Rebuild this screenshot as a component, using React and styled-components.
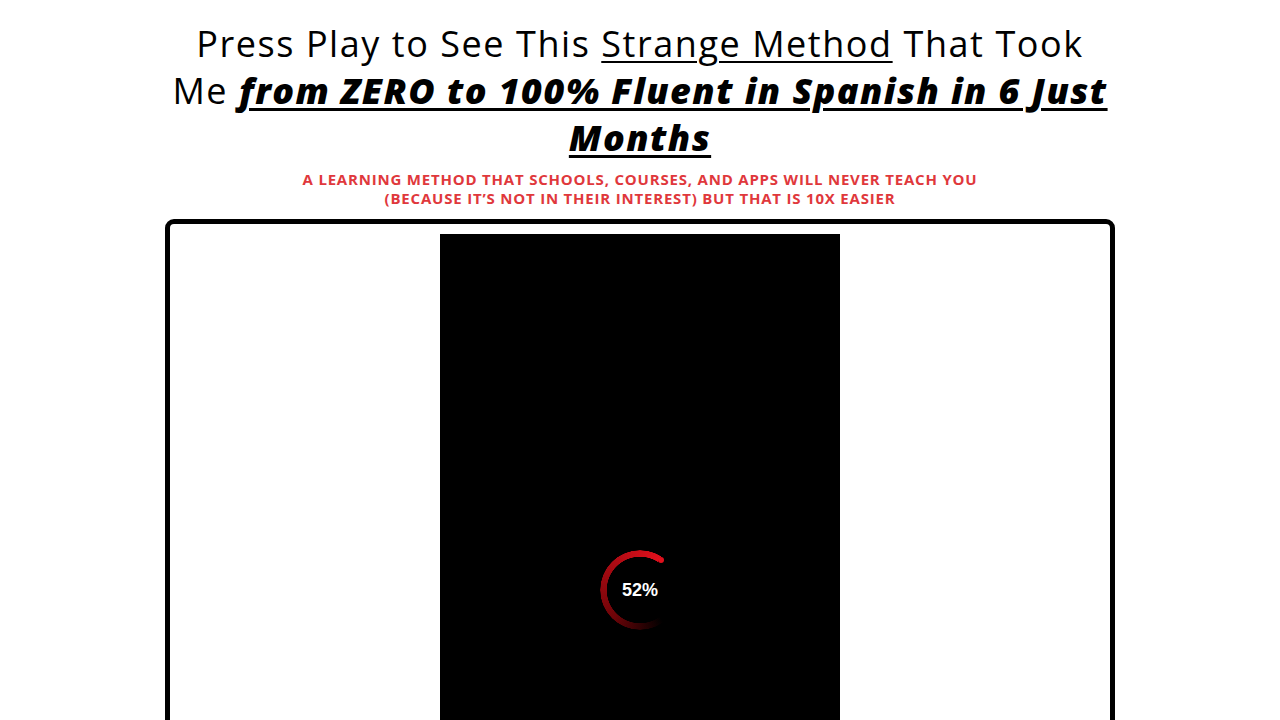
import React from 'react';
import styled, { createGlobalStyle } from 'styled-components';

const GlobalStyle = createGlobalStyle`
  html, body {
    margin: 0;
    padding: 0;
    background: #ffffff;
  }
  body {
    font-family: 'Open Sans', 'DejaVu Sans', sans-serif;
    overflow: hidden;
  }
`;

function Spinner({ percent }) {
  return (
    <SpinnerWrap>
      <Ring />
      <Cap />
      <Percent>{percent}%</Percent>
    </SpinnerWrap>
  );
}

function App() {
  return (
    <Page>
      <GlobalStyle />
      <Headline>
        Press Play to See This <Under>Strange Method</Under> That Took
        <br />
        Me <Strong>from ZERO to 100% Fluent in Spanish in 6 Just</Strong>
        <br />
        <Strong>Months</Strong>
      </Headline>
      <Subline>
        A learning method that schools, courses, and apps will never teach you
        <br />
        (because it’s not in their interest) but that is 10x easier
      </Subline>
      <Frame>
        <Video>
          <Spinner percent={52} />
        </Video>
      </Frame>
    </Page>
  );
}

export default App;

const Page = styled.div`
  width: 950px;
  margin: 0 auto;
  padding-top: 20px;
  display: flex;
  flex-direction: column;
  align-items: center;
`;

const Headline = styled.h1`
  margin: 0;
  font-family: 'Open Sans', sans-serif;
  font-weight: 400;
  font-size: 36px;
  letter-spacing: 1.55px;
  line-height: 47px;
  color: #000;
  text-align: center;
  white-space: nowrap;
`;

const Under = styled.span`
  text-decoration: underline;
  text-decoration-thickness: 2px;
  text-underline-offset: 4px;
`;

const Strong = styled.strong`
  font-weight: 800;
  font-style: italic;
  letter-spacing: 1.4px;
  text-decoration: underline;
  text-decoration-thickness: 3px;
  text-underline-offset: 4px;
`;

const Subline = styled.p`
  margin: 9px 0 0;
  font-family: 'Open Sans', sans-serif;
  font-weight: 700;
  font-size: 15px;
  letter-spacing: 0.8px;
  line-height: 19px;
  color: #e0383c;
  text-transform: uppercase;
  text-align: center;
`;

const Frame = styled.div`
  margin-top: 11px;
  width: 100%;
  box-sizing: border-box;
  border: 5px solid #000;
  border-radius: 9px;
  padding: 10px 0;
  display: flex;
  justify-content: center;
`;

const Video = styled.div`
  width: 400px;
  height: 711px;
  background: #000;
  display: flex;
  justify-content: center;
  padding-top: 316px;
  box-sizing: border-box;
`;

const SpinnerWrap = styled.div`
  position: relative;
  width: 80px;
  height: 80px;
  display: flex;
  align-items: center;
  justify-content: center;
`;

const Ring = styled.div`
  position: absolute;
  inset: 0;
  border-radius: 50%;
  background: conic-gradient(
    from 144deg,
    rgba(60, 0, 0, 0) 0deg,
    rgba(110, 4, 8, 1) 80deg,
    #e0101c 248deg,
    transparent 248deg
  );
  -webkit-mask: radial-gradient(circle, transparent 33px, #000 33.5px, #000 39.5px, transparent 40px);
  mask: radial-gradient(circle, transparent 33px, #000 33.5px, #000 39.5px, transparent 40px);
`;

const Cap = styled.div`
  position: absolute;
  width: 6px;
  height: 6px;
  border-radius: 50%;
  background: #e0101c;
  left: 58px;
  top: 7px;
`;

const Percent = styled.span`
  position: relative;
  font-family: 'Liberation Sans', Arial, sans-serif;
  font-weight: 700;
  font-size: 18px;
  color: #fff;
`;
